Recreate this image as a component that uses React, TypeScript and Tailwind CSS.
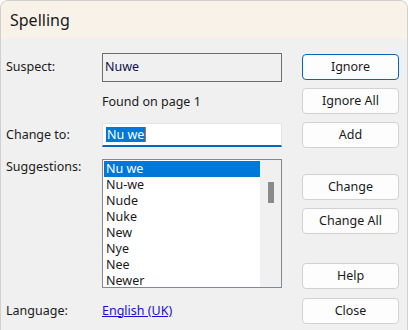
import React from "react";

const font = { fontFamily: '"Noto Sans", "Open Sans", sans-serif' };

const suggestions = ["Nu we", "Nu-we", "Nude", "Nuke", "New", "Nye", "Nee", "Newer"];

function Btn({ label, primary, className = "" }: { label: string; primary?: boolean; className?: string }) {
  return (
    <button
      type="button"
      className={`h-[26px] w-[97px] rounded-[4px] bg-[#fdfdfd] text-[12.5px] text-[#1a1a1a] ${
        primary ? "border border-[#0067c0]" : "border border-[#d1d1d1]"
      } ${className}`}
    >
      {label}
    </button>
  );
}

export default function App() {
  return (
    <div className="h-[330px] w-[408px] overflow-hidden bg-white" style={font}>
      <div className="flex h-full w-full flex-col overflow-hidden rounded-t-[8px] border-l border-t border-r border-[#cfcfcf] bg-[#f0f0f0]">
        {/* title bar */}
        <div className="flex h-[37px] shrink-0 items-center bg-[#f9f2e9] pl-[9px] text-[16px] text-[#1a1a1a]">
          Spelling
        </div>

        <div className="flex text-[12.5px] text-[#1a1a1a]">
          {/* left side: labels and fields */}
          <div className="flex w-[281px] shrink-0 flex-col">
            <div className="mt-[15px] flex h-[29px] items-center">
              <span className="w-[101px] shrink-0 pl-[5px]">Suspect:</span>
              <div className="flex h-[29px] w-[180px] shrink-0 items-center border border-[#6e6e6e] pl-[2px] text-[#10104a]">
                Nuwe
              </div>
            </div>

            <div className="flex h-[41px] items-center pl-[101px]">Found on page 1</div>

            <div className="flex h-[24px] items-center">
              <span className="w-[101px] shrink-0 pl-[5px]">Change to:</span>
              <div className="flex h-[24px] w-[180px] shrink-0 items-center border-x border-t border-[#e3e3e3] border-b-2 border-b-[#0067c0] bg-white pl-[3px]">
                <span className="bg-[#0078d7] px-[1px] leading-[15px] text-white">Nu we</span>
                <span className="h-[15px] w-[1px] bg-[#e07020]" />
              </div>
            </div>

            <div className="mt-[12px] flex">
              <span className="w-[101px] shrink-0 pl-[5px] leading-[16px]">Suggestions:</span>
              <div className="flex h-[129px] w-[180px] shrink-0 border border-[#828790] bg-white">
                <div className="flex flex-1 flex-col pl-[1px] pt-[1px]">
                  {suggestions.map((s, i) => (
                    <div
                      key={s}
                      className={`flex h-[16px] items-center pl-[2px] leading-[16px] ${i === 0 ? "bg-[#0078d7] text-white" : ""}`}
                    >
                      {s}
                    </div>
                  ))}
                </div>
                <div className="flex w-[21px] justify-center bg-[#f0f0f0] pt-[22px]">
                  <div className="h-[21px] w-[6px] bg-[#8a8a8a]" />
                </div>
              </div>
            </div>

            <div className="mt-[11px] flex h-[24px] items-center">
              <span className="w-[101px] shrink-0 pl-[5px]">Language:</span>
              <a href="#" className="text-[#1a0dd8] underline">
                English (UK)
              </a>
            </div>
          </div>

          {/* right side: buttons */}
          <div className="ml-[20px] flex flex-col">
            <Btn label="Ignore" primary className="mt-[16px]" />
            <Btn label="Ignore All" className="mt-[8px]" />
            <Btn label="Add" className="mt-[8px]" />
            <Btn label="Change" className="mt-[26px]" />
            <Btn label="Change All" className="mt-[8px]" />
            <Btn label="Help" className="mt-[29px]" />
            <Btn label="Close" className="mt-[9px]" />
          </div>
        </div>
      </div>
    </div>
  );
}
